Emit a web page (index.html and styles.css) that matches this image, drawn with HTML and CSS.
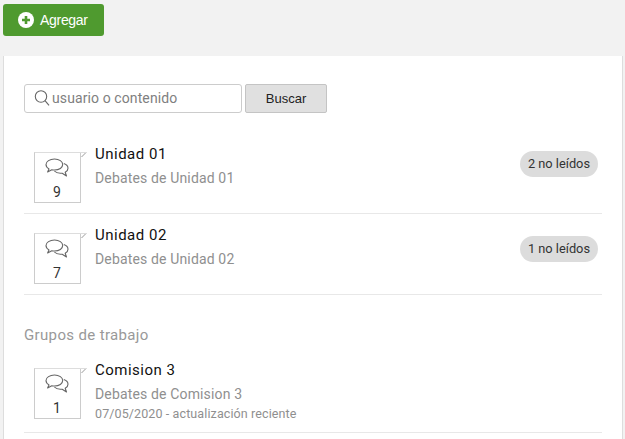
FILE: index.html
```html
<!DOCTYPE html>
<html lang="es">
<head>
    <meta charset="UTF-8">
    <title>Debates</title>
    <link rel="stylesheet" href="styles.css">
</head>
<body>
    <div class="toolbar">
        <button class="btn-add">
            <svg class="add-icon" viewBox="0 0 16 16" width="16" height="16">
                <circle cx="8" cy="8" r="8" fill="#fff"/>
                <path d="M8 4v8M4 8h8" stroke="#4f9a2f" stroke-width="2.6"/>
            </svg>
            Agregar
        </button>
    </div>

    <div class="card">
        <form class="search">
            <div class="search-box">
                <svg class="search-icon" viewBox="0 0 16 18" width="16" height="18">
                    <circle cx="7" cy="7.5" r="5.7" fill="none" stroke="#666" stroke-width="1.1"/>
                    <path d="M11 11.7l4 4.6" fill="none" stroke="#666" stroke-width="1.1"/>
                </svg>
                <span>usuario o contenido</span>
            </div>
            <button type="button" class="btn-search">Buscar</button>
        </form>

        <div class="row">
            <div class="count">
                <svg class="chat" viewBox="0 0 24 20" width="24" height="20">
                    <use href="#chat-icon"/>
                </svg>
                <span>9</span>
            </div>
            <div class="info">
                <div class="title">Unidad 01</div>
                <div class="desc">Debates de Unidad 01</div>
            </div>
            <div class="badge">2 no leídos</div>
        </div>

        <div class="row">
            <div class="count">
                <svg class="chat" viewBox="0 0 24 20" width="24" height="20">
                    <use href="#chat-icon"/>
                </svg>
                <span>7</span>
            </div>
            <div class="info">
                <div class="title">Unidad 02</div>
                <div class="desc">Debates de Unidad 02</div>
            </div>
            <div class="badge badge-low">1 no leídos</div>
        </div>

        <h2 class="section">Grupos de trabajo</h2>

        <div class="row row-group">
            <div class="count">
                <svg class="chat" viewBox="0 0 24 20" width="24" height="20">
                    <use href="#chat-icon"/>
                </svg>
                <span>1</span>
            </div>
            <div class="info">
                <div class="title">Comision 3</div>
                <div class="desc">Debates de Comision 3</div>
                <div class="date">07/05/2020 - actualización reciente</div>
            </div>
        </div>
    </div>

    <svg width="0" height="0" class="defs">
        <defs>
            <g id="chat-icon" fill="none" stroke="#666" stroke-width="1.1" stroke-linejoin="round">
                <path d="M9.500 1C4.800 1 1 3.400 1 6.600c0 1.800 1.200 3.300 3 4.300L2.600 14l4.200-2.300c.9.200 1.800.3 2.700.3 4.700 0 8.200-2.300 8.200-5.400S14.200 1 9.500 1z"/>
                <path d="M18.800 5.500c2.600.9 4.200 2.600 4.200 4.700 0 1.700-1.100 3.100-2.800 4l1.300 3.800-4.300-2.800c-.6.100-1.200.1-1.800.1-2.600 0-4.800-.9-6-2.300"/>
            </g>
        </defs>
    </svg>
</body>
</html>
```

FILE: styles.css
```css
html, body {
    height: 439px;
    overflow: hidden;
}
body {
    margin: 0;
    background-color: #f2f2f2;
    font-family: Roboto, Arial, sans-serif;
    color: #222;
}
.defs {
    display: none;
}
.toolbar {
    padding: 4px 3px 0;
    height: 56px;
    box-sizing: border-box;
}
.btn-add {
    display: flex;
    align-items: center;
    gap: 6px;
    width: 101px;
    height: 32px;
    padding: 0 0 0 15px;
    border: none;
    border-radius: 3px;
    background-color: #4f9a2f;
    color: #fff;
    font-family: "Liberation Sans", Arial, sans-serif;
    font-size: 14px;
    letter-spacing: -0.3px;
}
.card {
    margin: 0 2px 0 3px;
    padding: 28px 20px 0;
    background-color: #fff;
    border-left: 1px solid #ddd;
    border-right: 1px solid #ddd;
    height: 383px;
    box-sizing: border-box;
}
.search {
    display: flex;
    gap: 3px;
    margin-bottom: 20px;
}
.search-box {
    display: flex;
    align-items: center;
    width: 218px;
    height: 29px;
    box-sizing: border-box;
    padding: 0 0 1px 9px;
    border: 1px solid #ccc;
    border-radius: 3px;
    color: #808080;
    font-size: 14px;
    letter-spacing: 0.1px;
}
.search-icon {
    flex: none;
    margin-right: 2px;
}
.btn-search {
    width: 82px;
    height: 29px;
    border: 1px solid #c4c4c4;
    border-radius: 2px;
    background-color: #e0e0e0;
    color: #222;
    font-family: "Liberation Sans", Arial, sans-serif;
    font-size: 13px;
}
.row {
    display: flex;
    align-items: flex-start;
    width: 578px;
    height: 81px;
    box-sizing: border-box;
    padding: 12px 4px 0 10px;
    border-bottom: 1px solid #e8e8e8;
}
.row-group {
    height: 84px;
}
.count {
    position: relative;
    flex: none;
    width: 47px;
    height: 51px;
    margin-top: 7px;
    box-sizing: border-box;
    border: 1px solid #ccc;
    border-top-color: #ddd;
    padding-right: 1px;
    text-align: center;
    font-size: 14px;
    color: #333;
}
/* colita del globo, arriba a la derecha */
.count::after {
    content: "";
    position: absolute;
    top: -1px;
    right: -7px;
    width: 7px;
    height: 6px;
    background:
        linear-gradient(#ddd, #ddd) top / 100% 1px no-repeat,
        linear-gradient(to top left, transparent 44%, #ccc 44%, #ccc 58%, transparent 58%);
}
.chat {
    display: block;
    margin: 5px auto 0 10px;
}
.count span {
    display: block;
    margin-top: 6px;
    line-height: 16px;
}
.info {
    flex: 1;
    margin-left: 14px;
}
.title {
    font-size: 15px;
    line-height: 18px;
    color: #111;
    letter-spacing: 0.5px;
}
.desc {
    margin-top: 6px;
    font-size: 14px;
    line-height: 18px;
    color: #8f8f8f;
    letter-spacing: 0.15px;
}
.date {
    margin-top: 2px;
    font-size: 12.500px;
    line-height: 17px;
    color: #8f8f8f;
    letter-spacing: 0.11px;
}
.badge {
    margin-top: 6px;
    padding: 0 8px;
    height: 26px;
    line-height: 26px;
    border-radius: 13px;
    background-color: #dcdcdc;
    font-size: 12.800px;
    color: #333;
}
.badge-low {
    margin-top: 10px;
}
.section {
    margin: 31px 0 5px;
    font-size: 15px;
    font-weight: 400;
    line-height: 18px;
    color: #999;
    letter-spacing: 0.35px;
}
```
